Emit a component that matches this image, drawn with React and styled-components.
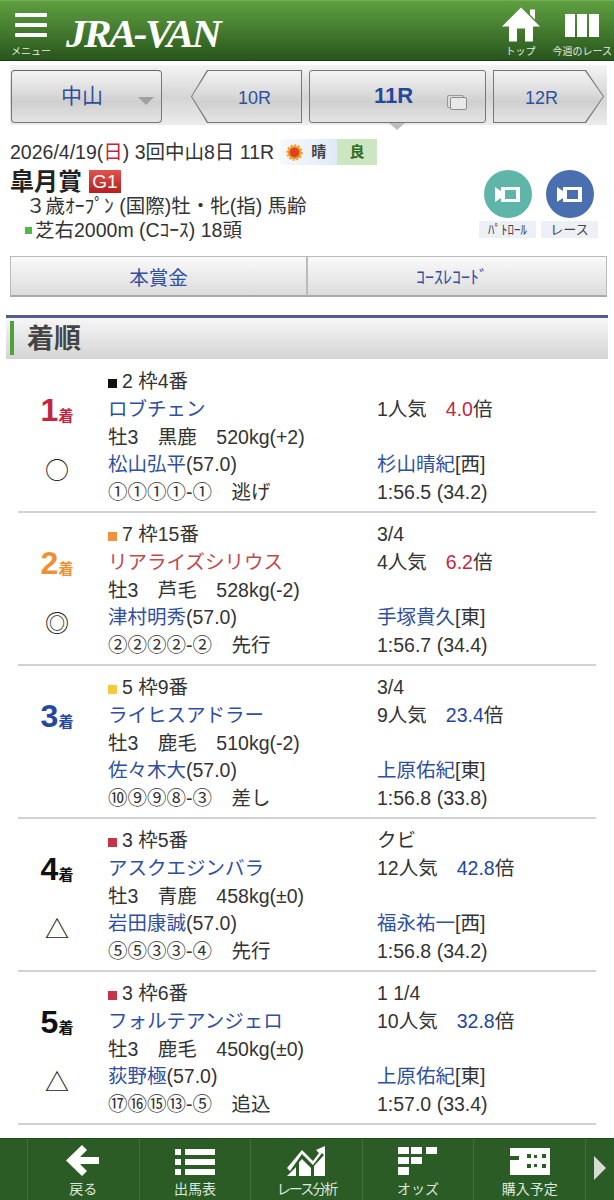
import React from "react";
import styled, { createGlobalStyle, css } from "styled-components";

const results = [
  {
    rank: 1, rankColor: "#c2273f", mark: "○", frame: "#111", frameNo: "2 枠4番", margin: "",
    horse: "ロブチェン", body: "牡3　黒鹿　520kg(+2)", jockey: "松山弘平", weight: "(57.0)",
    corners: "①①①①-①　逃げ", pop: "1人気", odds: "4.0", hot: true,
    trainer: "杉山晴紀", side: "[西]", time: "1:56.5 (34.2)",
  },
  {
    rank: 2, rankColor: "#ee8f33", mark: "◎", frame: "#f0923c", frameNo: "7 枠15番", margin: "3/4",
    horse: "リアライズシリウス", horseHot: true, body: "牡3　芦毛　528kg(-2)", jockey: "津村明秀", weight: "(57.0)",
    corners: "②②②②-②　先行", pop: "4人気", odds: "6.2", hot: true,
    trainer: "手塚貴久", side: "[東]", time: "1:56.7 (34.4)",
  },
  {
    rank: 3, rankColor: "#24479f", mark: "", frame: "#f6c83e", frameNo: "5 枠9番", margin: "3/4",
    horse: "ライヒスアドラー", body: "牡3　鹿毛　510kg(-2)", jockey: "佐々木大", weight: "(57.0)",
    corners: "⑩⑨⑨⑧-③　差し", pop: "9人気", odds: "23.4",
    trainer: "上原佑紀", side: "[東]", time: "1:56.8 (33.8)",
  },
  {
    rank: 4, rankColor: "#111", mark: "△", frame: "#c8324a", frameNo: "3 枠5番", margin: "クビ",
    horse: "アスクエジンバラ", body: "牡3　青鹿　458kg(±0)", jockey: "岩田康誠", weight: "(57.0)",
    corners: "⑤⑤③③-④　先行", pop: "12人気", odds: "42.8",
    trainer: "福永祐一", side: "[西]", time: "1:56.8 (34.2)",
  },
  {
    rank: 5, rankColor: "#111", mark: "△", frame: "#c8324a", frameNo: "3 枠6番", margin: "1 1/4",
    horse: "フォルテアンジェロ", body: "牡3　鹿毛　450kg(±0)", jockey: "荻野極", weight: "(57.0)",
    corners: "⑰⑯⑮⑬-⑤　追込", pop: "10人気", odds: "32.8",
    trainer: "上原佑紀", side: "[東]", time: "1:57.0 (33.4)",
  },
];

const navItems = [
  {
    label: "戻る",
    icon: (
      <svg width="36" height="36" viewBox="0 0 36 36" fill="#fff">
        <path d="M17 2l5 5-7 7h19v7H15l7 7-5 5L1 17.500z" />
      </svg>
    ),
  },
  {
    label: "出馬表",
    icon: (
      <svg width="42" height="30" viewBox="0 0 42 30" fill="#fff">
        <rect x="1" y="3" width="6" height="6" />
        <rect x="1" y="13" width="6" height="6" />
        <rect x="1" y="23" width="6" height="6" />
        <rect x="11" y="3" width="30" height="6" />
        <rect x="11" y="13" width="30" height="6" />
        <rect x="11" y="23" width="30" height="6" />
      </svg>
    ),
  },
  {
    label: "レース分析",
    tight: true,
    icon: (
      <svg width="38" height="30" viewBox="0 0 38 30" fill="#fff">
        <path d="M0 22L15 4l11 11 6-8-3-3 9-4v10l-3-3-9 12-11-11L3 25z" />
        <path d="M0 30l9-9v9zM12 30V16l3-3 9 9v8zM27 30V20l11-12v22z" />
      </svg>
    ),
  },
  {
    label: "オッズ",
    icon: (
      <svg width="42" height="32" viewBox="0 0 42 32" fill="#fff">
        <rect x="1" y="2" width="11" height="7" />
        <rect x="14" y="2" width="11" height="7" />
        <rect x="29" y="2" width="11" height="7" />
        <rect x="1" y="12" width="11" height="7" />
        <rect x="14" y="12" width="11" height="7" />
        <rect x="1" y="22" width="11" height="8" />
      </svg>
    ),
  },
  {
    label: "購入予定",
    icon: (
      <svg width="42" height="30" viewBox="0 0 42 30">
        <path fill="#fff" d="M1 2h40v27H1z" />
        <path fill="#2b5c26" d="M0 10h10v4H0zM18 8h4v4h-4zM33 8h4v4h-4zM18 18h4v4h-4zM33 18h4v4h-4zM25 9h3v3h-3zM25 18h3v3h-3z" />
      </svg>
    ),
  },
];

export default function App() {
  return (
    <>
      <GlobalStyle />
      <Header>
        <HeaderLeft>
          <MenuButton>
            <MenuBars>
              <i />
              <i />
              <i />
            </MenuBars>
            <TinyLabel>メニュー</TinyLabel>
          </MenuButton>
          <Logo>JRA-VAN</Logo>
        </HeaderLeft>
        <HeaderRight>
          <IconButton>
            <svg width="38" height="35" viewBox="0 0 38 34" fill="#fff">
              <path d="M19 0l19 19h-7v15h-8V21h-8v13H7V19H0z" />
              <path d="M28 2h5v10l-5-5z" />
            </svg>
            <TinyLabel>トップ</TinyLabel>
          </IconButton>
          <IconButton>
            <Columns>
              <i />
              <i />
              <i />
            </Columns>
            <TinyLabel>今週のレース</TinyLabel>
          </IconButton>
        </HeaderRight>
      </Header>

      <TabBar>
        <VenueTab>
          <VenueName>中山</VenueName>
          <Caret />
        </VenueTab>
        <PointTab $dir="left">
          <span>10R</span>
        </PointTab>
        <CurrentTab>
          <span>11R</span>
          <CopyIcon />
        </CurrentTab>
        <PointTab $dir="right">
          <span>12R</span>
        </PointTab>
      </TabBar>

      <RaceInfo>
        <DateRow>
          <span>
            2026/4/19(<Sunday>日</Sunday>) 3回中山8日 11R
          </span>
          <Weather>
            <svg width="17" height="17" viewBox="0 0 18 18">
              <circle cx="9" cy="9" r="7" fill="#f08a1e" stroke="#f5a030" strokeWidth="3.500" strokeDasharray="2 1.600" />
              <circle cx="9" cy="9" r="5" fill="#d9431e" />
            </svg>
            晴
          </Weather>
          <Going>良</Going>
        </DateRow>
        <InfoBody>
          <div>
            <TitleRow>
              <RaceName>皐月賞</RaceName>
              <Grade>G1</Grade>
            </TitleRow>
            <Condition>３歳ｵｰﾌﾟﾝ (国際)牡・牝(指) 馬齢</Condition>
            <Course>
              <CourseDot />
              芝右2000m (Cｺｰｽ) 18頭
            </Course>
          </div>
          <Videos>
            <Video>
              <VideoCircle $color="#5fb5a8">
                <CameraIcon />
              </VideoCircle>
              <VideoLabel>ﾊﾟﾄﾛｰﾙ</VideoLabel>
            </Video>
            <Video>
              <VideoCircle $color="#4a6fae">
                <CameraIcon />
              </VideoCircle>
              <VideoLabel>レース</VideoLabel>
            </Video>
          </Videos>
        </InfoBody>
      </RaceInfo>

      <LinkButtons>
        <LinkButton>本賞金</LinkButton>
        <LinkButton $narrow>ｺｰｽﾚｺｰﾄﾞ</LinkButton>
      </LinkButtons>

      <SectionHead>
        <SectionTitle>着順</SectionTitle>
      </SectionHead>

      <ResultList>
        {results.map((r) => (
          <ResultRow key={r.rank}>
            <RankCol>
              <Rank $color={r.rankColor}>
                {r.rank}
                <small>着</small>
              </Rank>
              <Mark>{r.mark}</Mark>
            </RankCol>
            <div>
              <Line>
                <FrameDot $color={r.frame} />
                {r.frameNo}
              </Line>
              <Line>
                <HorseName $hot={r.horseHot}>{r.horse}</HorseName>
              </Line>
              <Line>{r.body}</Line>
              <Line>
                <Person>{r.jockey}</Person>
                {r.weight}
              </Line>
              <Line>{r.corners}</Line>
            </div>
            <div>
              <Line>{r.margin}</Line>
              <Line>
                {r.pop}
                <Odds $hot={r.hot}>{r.odds}</Odds>倍
              </Line>
              <Line />
              <Line>
                <Person>{r.trainer}</Person>
                {r.side}
              </Line>
              <Line>{r.time}</Line>
            </div>
          </ResultRow>
        ))}
      </ResultList>

      <BottomNav>
        <NavSpacer />
        {navItems.map((item) => (
          <NavItem key={item.label} $tight={item.tight}>
            <NavIcon>{item.icon}</NavIcon>
            <span>{item.label}</span>
          </NavItem>
        ))}
        <NavMore>
          <svg width="14" height="24" viewBox="0 0 14 24" fill="#d5dcd3">
            <path d="M1 0l12 12L1 24z" />
          </svg>
        </NavMore>
      </BottomNav>
    </>
  );
}

function CameraIcon() {
  return (
    <svg width="25" height="15" viewBox="0 0 25 15" fill="#fff">
      <path fillRule="evenodd" d="M0 0l6 4V0h19v15H6v-4l-6 4zM10 3v9h11V3z" />
    </svg>
  );
}

const GlobalStyle = createGlobalStyle`
  html, body {
    margin: 0;
    height: 1200px;
    overflow: hidden;
    background: #fff;
    font-family: "Liberation Sans", "Noto Sans CJK JP", sans-serif;
    color: #333;
  }
`;

const Header = styled.header`
  height: 59px;
  display: flex;
  justify-content: space-between;
  background: linear-gradient(#5f9e40 0, #4f8a36 30%, #28551c 100%);
  border-top: 1px solid #74ad55;
  border-bottom: 1px solid #1f3d16;
  margin-bottom: 4px;
`;

const HeaderLeft = styled.div`
  display: flex;
`;

const HeaderRight = styled.div`
  display: flex;
  gap: 13px;
  padding-right: 2px;
`;

const IconButton = styled.div`
  display: flex;
  flex-direction: column;
  align-items: center;
  justify-content: flex-end;
  padding-bottom: 2px;
  gap: 3px;
`;

const MenuButton = styled(IconButton)`
  padding-left: 11px;
`;

const TinyLabel = styled.span`
  font-size: 10px;
  line-height: 13px;
  color: #e6eee2;
  white-space: nowrap;
`;

const MenuBars = styled.div`
  width: 32px;
  display: flex;
  flex-direction: column;
  gap: 6px;
  margin-bottom: 5px;
  i {
    display: block;
    height: 4px;
    background: #fff;
    border-radius: 1px;
  }
`;

const Columns = styled.div`
  display: flex;
  gap: 2px;
  margin-bottom: 5px;
  i {
    display: block;
    width: 10px;
    height: 23px;
    background: #fff;
  }
`;

const Logo = styled.div`
  align-self: center;
  font-family: "Liberation Serif", serif;
  font-style: italic;
  font-weight: 700;
  font-size: 39px;
  color: #fff;
  letter-spacing: -2.500px;
  margin-left: 15px;
  margin-top: 5px;
  transform: scaleX(1.06);
  transform-origin: left;
`;

const TabBar = styled.nav`
  height: 60px;
  margin: 0 7px 0 10px;
  padding: 5px 0 2px 1px;
  box-sizing: border-box;
  display: flex;
  background: linear-gradient(#f4f4f4, #d4d4d4 55%, #ececec);
`;

const tabFace = "linear-gradient(#f3f3f3, #dadada 45%, #cfcfcf 60%, #e4e4e4)";

const tabText = css`
  color: #2f4f9f;
  font-size: 18px;
`;

const VenueTab = styled.div`
  width: 151px;
  box-sizing: border-box;
  position: relative;
  display: flex;
  align-items: center;
  justify-content: center;
  background: ${tabFace};
  border: 1px solid #777;
  border-top-color: #666;
  border-radius: 4px;
  margin-right: 29px;
`;

const VenueName = styled.span`
  color: #2f4f9f;
  font-size: 21px;
  margin-right: 9px;
  margin-bottom: 6px;
`;

const Caret = styled.i`
  position: absolute;
  right: 7px;
  top: 26px;
  width: 0;
  height: 0;
  border-left: 8px solid transparent;
  border-right: 8px solid transparent;
  border-top: 8px solid #a0a0a0;
`;

const PointTab = styled.div`
  ${tabText}
  width: 111px;
  position: relative;
  display: flex;
  align-items: center;
  justify-content: center;
  background: #777;
  margin-right: ${(p) => (p.$dir === "left" ? "7px" : "0")};
  clip-path: ${(p) =>
    p.$dir === "left"
      ? "polygon(0 50%, 16px 0, 100% 0, 100% 100%, 16px 100%)"
      : "polygon(0 0, calc(100% - 18px) 0, 100% 50%, calc(100% - 18px) 100%, 0 100%)"};
  &::before {
    content: "";
    position: absolute;
    inset: 1px;
    background: ${tabFace};
    clip-path: inherit;
  }
  span {
    position: relative;
    margin-top: 4px;
    margin-left: ${(p) => (p.$dir === "left" ? "16px" : "-14px")};
  }
`;

const CurrentTab = styled.div`
  width: 177px;
  box-sizing: border-box;
  position: relative;
  display: flex;
  align-items: center;
  justify-content: center;
  color: #24479f;
  font-size: 22px;
  font-weight: 700;
  background: ${tabFace};
  border: 1px solid #777;
  border-radius: 3px;
  margin-right: 7px;
  span {
    margin-right: 8px;
    margin-bottom: 2px;
  }
  &::after {
    content: "";
    position: absolute;
    left: 79px;
    bottom: -8px;
    border-left: 8px solid transparent;
    border-right: 8px solid transparent;
    border-top: 7px solid #bdbdbd;
  }
`;

const CopyIcon = styled.i`
  position: absolute;
  right: 18px;
  top: 26px;
  width: 15px;
  height: 11px;
  background: #e8e8e8;
  border: 1px solid #8d8d8d;
  border-radius: 2px;
  box-shadow: -3px -2px 0 -1px #dcdcdc, -3px -2px 0 0 #999;
`;

const RaceInfo = styled.section`
  padding: 14px 10px 0;
`;

const DateRow = styled.div`
  display: flex;
  align-items: center;
  font-size: 19.500px;
  line-height: 26px;
  height: 26px;
  white-space: nowrap;
`;

const Sunday = styled.span`
  color: #c2273f;
`;

const Weather = styled.span`
  display: flex;
  align-items: center;
  gap: 8px;
  margin-left: 6px;
  height: 26px;
  padding-left: 6px;
  box-sizing: border-box;
  width: 57px;
  background: linear-gradient(90deg, #f6f9fd, #dfeaf6);
  font-size: 15px;
  font-weight: 700;
  color: #444;
`;

const Going = styled.span`
  width: 40px;
  height: 26px;
  line-height: 26px;
  text-align: center;
  background: #cde6c2;
  color: #2c6b24;
  font-size: 15px;
  font-weight: 700;
`;

const InfoBody = styled.div`
  display: flex;
  justify-content: space-between;
`;

const TitleRow = styled.div`
  display: flex;
  align-items: center;
  gap: 7px;
  height: 29px;
`;

const RaceName = styled.h1`
  margin: 0;
  font-size: 24px;
  font-weight: 700;
  color: #222;
`;

const Grade = styled.span`
  width: 32px;
  height: 23px;
  line-height: 24px;
  margin-top: 3px;
  text-align: center;
  background: linear-gradient(#e0534e, #b3201f);
  color: #fff;
  font-size: 19px;
`;

const Condition = styled.div`
  font-size: 19.500px;
  line-height: 24px;
  padding-left: 16px;
  white-space: nowrap;
`;

const Course = styled.div`
  font-size: 19.500px;
  line-height: 24px;
  padding-left: 15px;
  white-space: nowrap;
  display: flex;
  align-items: center;
`;

const CourseDot = styled.i`
  width: 7px;
  height: 7px;
  background: #4fb848;
  margin-right: 3px;
`;

const Videos = styled.div`
  display: flex;
  gap: 5px;
  margin: 5px 6px 0 0;
`;

const Video = styled.div`
  display: flex;
  flex-direction: column;
  align-items: center;
  width: 57px;
  gap: 3px;
`;

const VideoCircle = styled.div`
  width: 48px;
  height: 48px;
  border-radius: 50%;
  background: ${(p) => p.$color};
  display: flex;
  align-items: center;
  justify-content: center;
`;

const VideoLabel = styled.span`
  width: 100%;
  height: 17px;
  line-height: 17px;
  text-align: center;
  background: #eef0f7;
  font-size: 13px;
  color: #444;
`;

const LinkButtons = styled.div`
  margin: 14px 7px 0 10px;
  display: grid;
  grid-template-columns: 297px 1fr;
  height: 41px;
`;

const LinkButton = styled.div`
  display: flex;
  align-items: center;
  justify-content: center;
  box-sizing: border-box;
  background: linear-gradient(#fafafa, #dcdcdc);
  border: 1px solid #bbb;
  border-bottom: 2px solid #a8a8a8;
  color: #2f4f9f;
  font-size: ${(p) => (p.$narrow ? "18px" : "19.500px")};
  padding-right: ${(p) => (p.$narrow ? "10px" : "0")};
`;

const SectionHead = styled.div`
  margin: 18px 6px 0;
  height: 44px;
  box-sizing: border-box;
  border-top: 3px solid #545b8f;
  background: linear-gradient(#f6f6f6, #d4d4d4);
  padding: 3px 0 4px 4px;
`;

const SectionTitle = styled.h2`
  margin: 0;
  height: 100%;
  border-left: 4px solid #4fa23a;
  padding-left: 13px;
  font-size: 27px;
  font-weight: 700;
  line-height: 36px;
  color: #444;
`;

const ResultList = styled.div`
  margin: 1px 18px 0;
`;

const ResultRow = styled.div`
  display: grid;
  grid-template-columns: 90px 269px 1fr;
  height: 153px;
  box-sizing: border-box;
  padding-top: 8px;
  border-bottom: 2px solid #d2d2d2;
`;

const RankCol = styled.div`
  display: flex;
  flex-direction: column;
  align-items: center;
  width: 78px;
`;

const Rank = styled.div`
  margin-top: 22px;
  height: 40px;
  font-size: 32px;
  line-height: 40px;
  font-weight: 700;
  color: ${(p) => p.$color};
  small {
    font-size: 15px;
  }
`;

const Mark = styled.div`
  margin-top: 23px;
  font-family: "Noto Sans CJK JP", sans-serif;
  font-size: 24px;
  line-height: 32px;
  color: #222;
`;

const Line = styled.div`
  height: 27.750px;
  line-height: 27.750px;
  font-size: 19.500px;
  color: #333;
  white-space: nowrap;
`;

const FrameDot = styled.i`
  display: inline-block;
  width: 9px;
  height: 9px;
  margin-right: 5px;
  background: ${(p) => p.$color};
`;

const HorseName = styled.span`
  color: ${(p) => (p.$hot ? "#c04a50" : "#2f4f9f")};
`;

const Person = styled.span`
  color: #2f4f9f;
`;

const Odds = styled.span`
  margin-left: 19px;
  color: ${(p) => (p.$hot ? "#c2273f" : "#24479f")};
`;

const BottomNav = styled.nav`
  position: fixed;
  left: 0;
  right: 0;
  bottom: 0;
  height: 62px;
  display: grid;
  grid-template-columns: 27px repeat(5, 1fr) 29px;
  background: #2b5c26;
  border-top: 1px solid #1f4a1b;
  box-sizing: border-box;
`;

const NavSpacer = styled.div``;

const NavItem = styled.div`
  display: flex;
  flex-direction: column;
  align-items: center;
  justify-content: flex-end;
  border-left: 1px solid #3f7039;
  color: #dfe8dc;
  font-size: 14px;
  letter-spacing: ${(p) => (p.$tight ? "-2px" : "0")};
  line-height: 16px;
  padding-bottom: 3px;
  white-space: nowrap;
`;

const NavIcon = styled.div`
  height: 40px;
  display: flex;
  align-items: center;
  justify-content: center;
`;

const NavMore = styled.div`
  display: flex;
  align-items: center;
  justify-content: center;
  border-left: 1px solid #3f7039;
  padding-bottom: 4px;
`;
